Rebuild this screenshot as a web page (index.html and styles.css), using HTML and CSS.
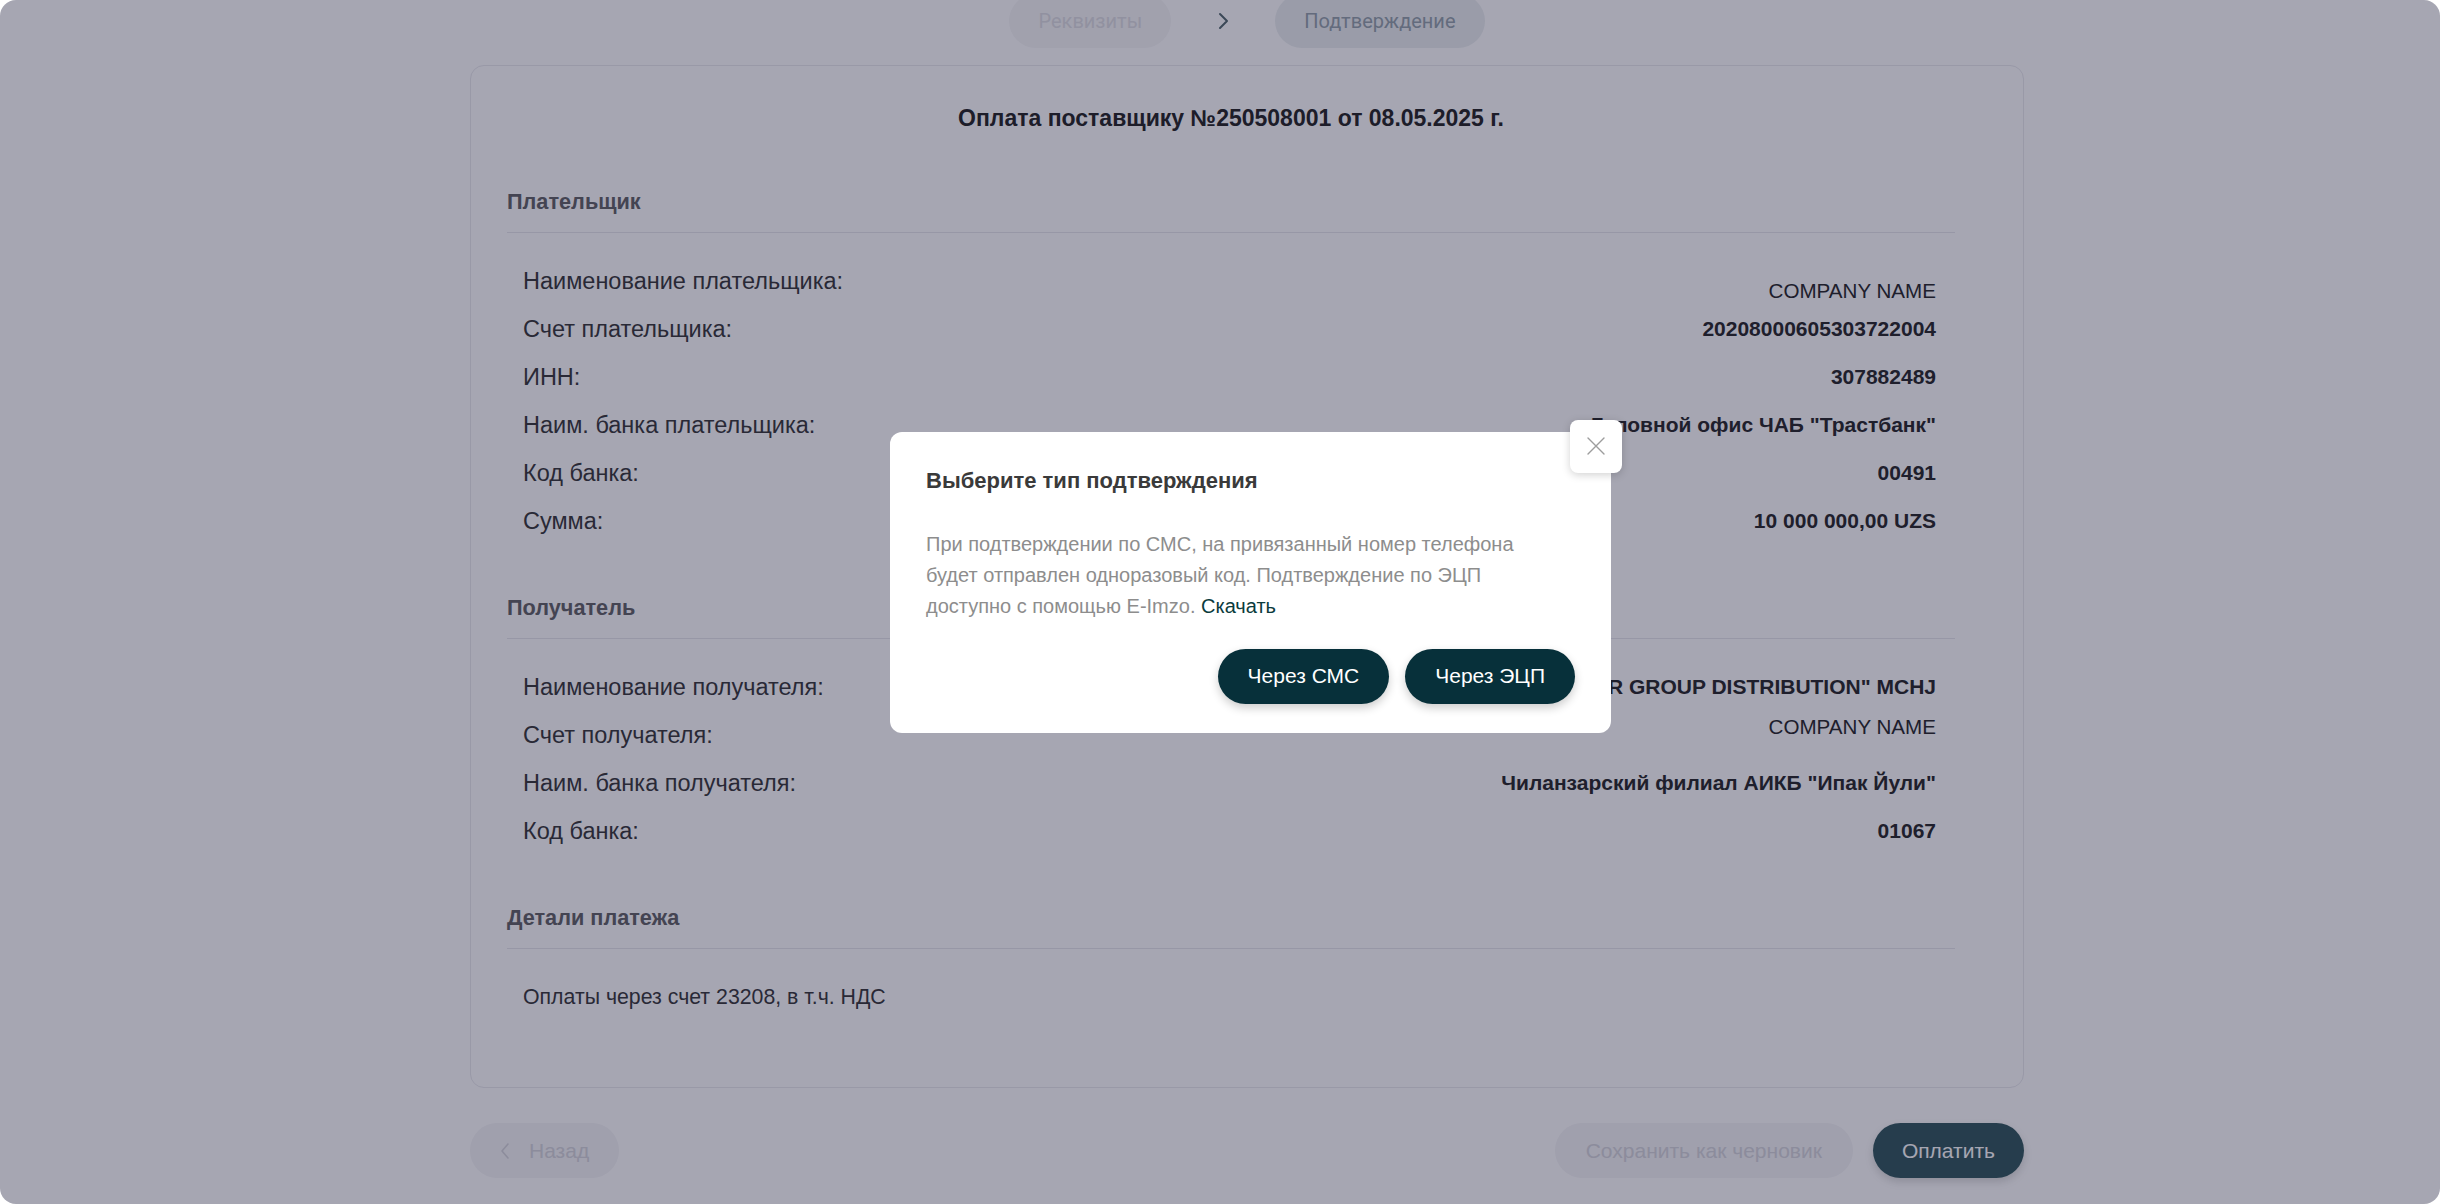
FILE: index.html
```html
<!DOCTYPE html>
<html lang="ru">
<head>
    <meta charset="UTF-8">
    <meta name="viewport" content="width=device-width, initial-scale=1.0">
    <title>Оплата поставщику</title>
    <link rel="stylesheet" href="styles.css">
</head>
<body>
    <div class="app">
        <main class="page">
            <nav class="stepper">
                <span class="step step-done">Реквизиты</span>
                <svg class="step-arrow" width="24" height="24" viewBox="0 0 24 24" fill="none">
                    <path d="M9 5l7 7-7 7" stroke="currentColor" stroke-width="2" stroke-linecap="round" stroke-linejoin="round"/>
                </svg>
                <span class="step step-active">Подтверждение</span>
            </nav>

            <section class="doc-card">
                <h1 class="doc-title">Оплата поставщику №250508001 от 08.05.2025 г.</h1>

                <div class="doc-section">
                    <h2 class="section-title">Плательщик</h2>
                    <div class="rows">
                        <div class="row">
                            <span class="label">Наименование плательщика:</span>
                            <span class="value value-plain value-low">COMPANY NAME</span>
                        </div>
                        <div class="row">
                            <span class="label">Счет плательщика:</span>
                            <span class="value">20208000605303722004</span>
                        </div>
                        <div class="row">
                            <span class="label">ИНН:</span>
                            <span class="value">307882489</span>
                        </div>
                        <div class="row">
                            <span class="label">Наим. банка плательщика:</span>
                            <span class="value">Головной офис ЧАБ "Трастбанк"</span>
                        </div>
                        <div class="row">
                            <span class="label">Код банка:</span>
                            <span class="value">00491</span>
                        </div>
                        <div class="row">
                            <span class="label">Сумма:</span>
                            <span class="value">10 000 000,00 UZS</span>
                        </div>
                    </div>
                </div>

                <div class="doc-section">
                    <h2 class="section-title">Получатель</h2>
                    <div class="rows">
                        <div class="row">
                            <span class="label">Наименование получателя:</span>
                            <span class="value">"STAR GROUP DISTRIBUTION" MCHJ</span>
                        </div>
                        <div class="row">
                            <span class="label">Счет получателя:</span>
                            <span class="value value-plain value-high">COMPANY NAME</span>
                        </div>
                        <div class="row">
                            <span class="label">Наим. банка получателя:</span>
                            <span class="value">Чиланзарский филиал АИКБ "Ипак Йули"</span>
                        </div>
                        <div class="row">
                            <span class="label">Код банка:</span>
                            <span class="value">01067</span>
                        </div>
                    </div>
                </div>

                <div class="doc-section">
                    <h2 class="section-title">Детали платежа</h2>
                    <div class="rows">
                        <div class="row">
                            <span class="details-text">Оплаты через счет 23208, в т.ч. НДС</span>
                        </div>
                    </div>
                </div>
            </section>

            <div class="actions">
                <button class="btn btn-ghost btn-back">
                    <svg width="14" height="20" viewBox="0 0 14 20" fill="none">
                        <path d="M10 3L4 10l6 7" stroke="currentColor" stroke-width="1.6" stroke-linecap="round" stroke-linejoin="round"/>
                    </svg>
                    Назад
                </button>
                <div class="actions-right">
                    <button class="btn btn-ghost btn-draft">Сохранить как черновик</button>
                    <button class="btn btn-primary">Оплатить</button>
                </div>
            </div>
        </main>

        <div class="overlay">
            <div class="modal">
                <button class="modal-close" aria-label="Закрыть">
                    <svg width="22" height="22" viewBox="0 0 22 22" fill="none">
                        <path d="M3 3l16 16M19 3L3 19" stroke="currentColor" stroke-width="1.4" stroke-linecap="round"/>
                    </svg>
                </button>
                <h3 class="modal-title">Выберите тип подтверждения</h3>
                <p class="modal-text">
                    При подтверждении по СМС, на привязанный номер телефона<br>
                    будет отправлен одноразовый код. Подтверждение по ЭЦП<br>
                    доступно с помощью E-Imzo. <a href="#" class="modal-link">Скачать</a>
                </p>
                <div class="modal-actions">
                    <button class="btn btn-dark">Через СМС</button>
                    <button class="btn btn-dark">Через ЭЦП</button>
                </div>
            </div>
        </div>
    </div>
</body>
</html>
```

FILE: styles.css
```css
* {
    box-sizing: border-box;
}

body {
    margin: 0;
    background: #fff;
    font-family: 'Liberation Sans', Arial, sans-serif;
}

.app {
    position: relative;
    height: 1204px;
    border-radius: 16px;
    overflow: hidden;
    background: #fff;
    padding-left: 54px;
}

.page {
    width: 1554px;
    margin: 0 auto;
}

/* Stepper */
.stepper {
    display: flex;
    justify-content: center;
    align-items: center;
    gap: 40px;
    margin-top: -6px;
    height: 54px;
    margin-bottom: 17px;
}

.step {
    height: 54px;
    line-height: 54px;
    padding: 0 29px;
    border-radius: 27px;
    font-family: Roboto, 'Liberation Sans', sans-serif;
    font-size: 20px;
}

.step-done {
    background: #f7f7f8;
    color: #dedee2;
}

.step-active {
    background: #ecf0f1;
    color: #95a2ab;
}

.step-arrow {
    color: #566b70;
}

/* Document card */
.doc-card {
    border: 1px solid #eaeaee;
    border-radius: 14px;
    padding: 37px 68px 66px 36px;
}

.doc-title {
    margin: 0 0 57px;
    text-align: center;
    font-size: 23px;
    line-height: 30px;
    font-weight: 700;
    color: #272727;
}

.doc-section + .doc-section {
    margin-top: 51px;
}

.section-title {
    margin: 0;
    padding-bottom: 18px;
    border-bottom: 1px solid #e8e8ec;
    font-size: 21.7px;
    line-height: 24px;
    font-weight: 700;
    color: #646468;
}

.rows {
    padding-top: 24px;
}

.row {
    display: flex;
    justify-content: space-between;
    align-items: center;
    height: 48px;
    padding: 0 19px 0 16px;
}

.label {
    font-size: 23.5px;
    color: #3a3a3c;
}

.details-text {
    font-size: 21.3px;
    color: #3a3a3c;
}

.value {
    font-size: 21px;
    font-weight: 700;
    color: #2a2a2c;
}

.value-plain {
    font-size: 20.6px;
    font-weight: 400;
}

.value-low {
    margin-top: 20px;
}

.value-high {
    margin-bottom: 16px;
}

/* Bottom actions */
.actions {
    display: flex;
    justify-content: space-between;
    margin-top: 35px;
}

.actions-right {
    display: flex;
    gap: 20px;
}

.btn {
    display: inline-flex;
    align-items: center;
    justify-content: center;
    height: 55px;
    padding: 0 29px;
    border: none;
    border-radius: 28px;
    font-family: inherit;
    font-size: 21px;
    font-weight: 400;
    cursor: pointer;
}

.btn-ghost {
    background: #f5f5f7;
    color: #d6d6dc;
}

.btn-back {
    gap: 17px;
    padding-left: 28px;
    padding-right: 30px;
}

.btn-draft {
    padding: 0 31px;
}

.btn-primary {
    background: #355a5f;
    color: #fff;
    box-shadow: 0 4px 8px rgba(0, 0, 0, 0.15);
}

/* Modal */
.overlay {
    position: absolute;
    inset: 0;
    display: flex;
    align-items: center;
    justify-content: center;
    padding: 0 0 40px 61px;
    background: rgba(14, 14, 47, 0.37);
}

.modal {
    position: relative;
    width: 721px;
    background: #fff;
    border-radius: 12px;
    padding: 36px 36px 29px;
}

.modal-close {
    position: absolute;
    top: -12px;
    right: -11px;
    width: 52px;
    height: 53px;
    display: flex;
    align-items: center;
    justify-content: center;
    border: none;
    border-radius: 8px;
    background: #fff;
    color: #9d9d9d;
    box-shadow: 0 2px 8px rgba(0, 0, 0, 0.18);
    cursor: pointer;
}

.modal-title {
    margin: 0;
    font-size: 22px;
    line-height: 26px;
    font-weight: 700;
    color: #3a3a3a;
}

.modal-text {
    margin: 35px 0 0;
    font-size: 20px;
    line-height: 31px;
    color: #8d8d8d;
}

.modal-link {
    color: #0b3b3d;
    text-decoration: none;
}

.modal-actions {
    display: flex;
    justify-content: flex-end;
    gap: 16px;
    margin-top: 27px;
}

.btn-dark {
    background: #07303a;
    color: #fff;
    padding: 0 30px;
    box-shadow: 0 4px 10px rgba(0, 0, 0, 0.2);
}
```
